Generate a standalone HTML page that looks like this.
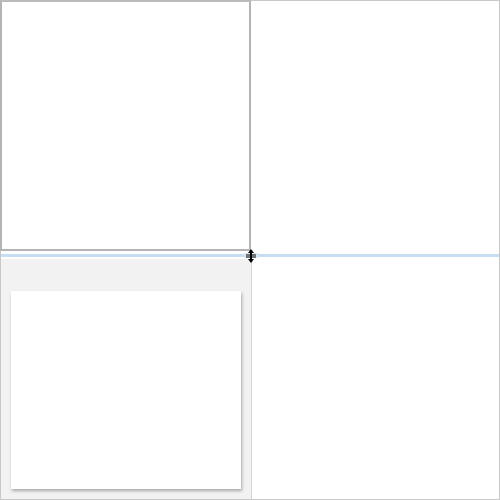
<!DOCTYPE html>
<html><head><style>
body{margin:0;width:500px;height:500px;position:relative;background:#fff;overflow:hidden}
div{position:absolute;box-sizing:border-box}
</style></head><body>
<div style="left:0;top:0;width:500px;height:500px;border:1px solid #c8c8c8"></div>
<div style="left:0;top:0;width:251px;height:251px;border:2px solid #b4b4b4;border-top-color:#bbb"></div>
<div style="left:1px;top:259px;width:251px;height:240px;background:#f2f2f2;border-right:1px solid #d6d6d6"></div>
<div style="left:11px;top:291px;width:230px;height:198px;background:#fff;box-shadow:1px 2px 3px rgba(0,0,0,0.3)"></div>
<div style="left:1px;top:254px;width:498px;height:3px;background:#c6ddf3"></div>
<div style="left:244px;top:253px;width:14px;height:5px;background:#dde7f0"></div>
<svg style="position:absolute;left:244px;top:248px" width="14" height="16" viewBox="0 0 14 16">
<path d="M7 1 L4 5 H10 Z M7 15 L4 11 H10 Z" fill="#000"/>
<rect x="6" y="4" width="2" height="8" fill="#000"/>
<rect x="2" y="6.5" width="10" height="1" fill="#000"/>
<rect x="2" y="8.5" width="10" height="1" fill="#000"/>
</svg>
</body></html>
